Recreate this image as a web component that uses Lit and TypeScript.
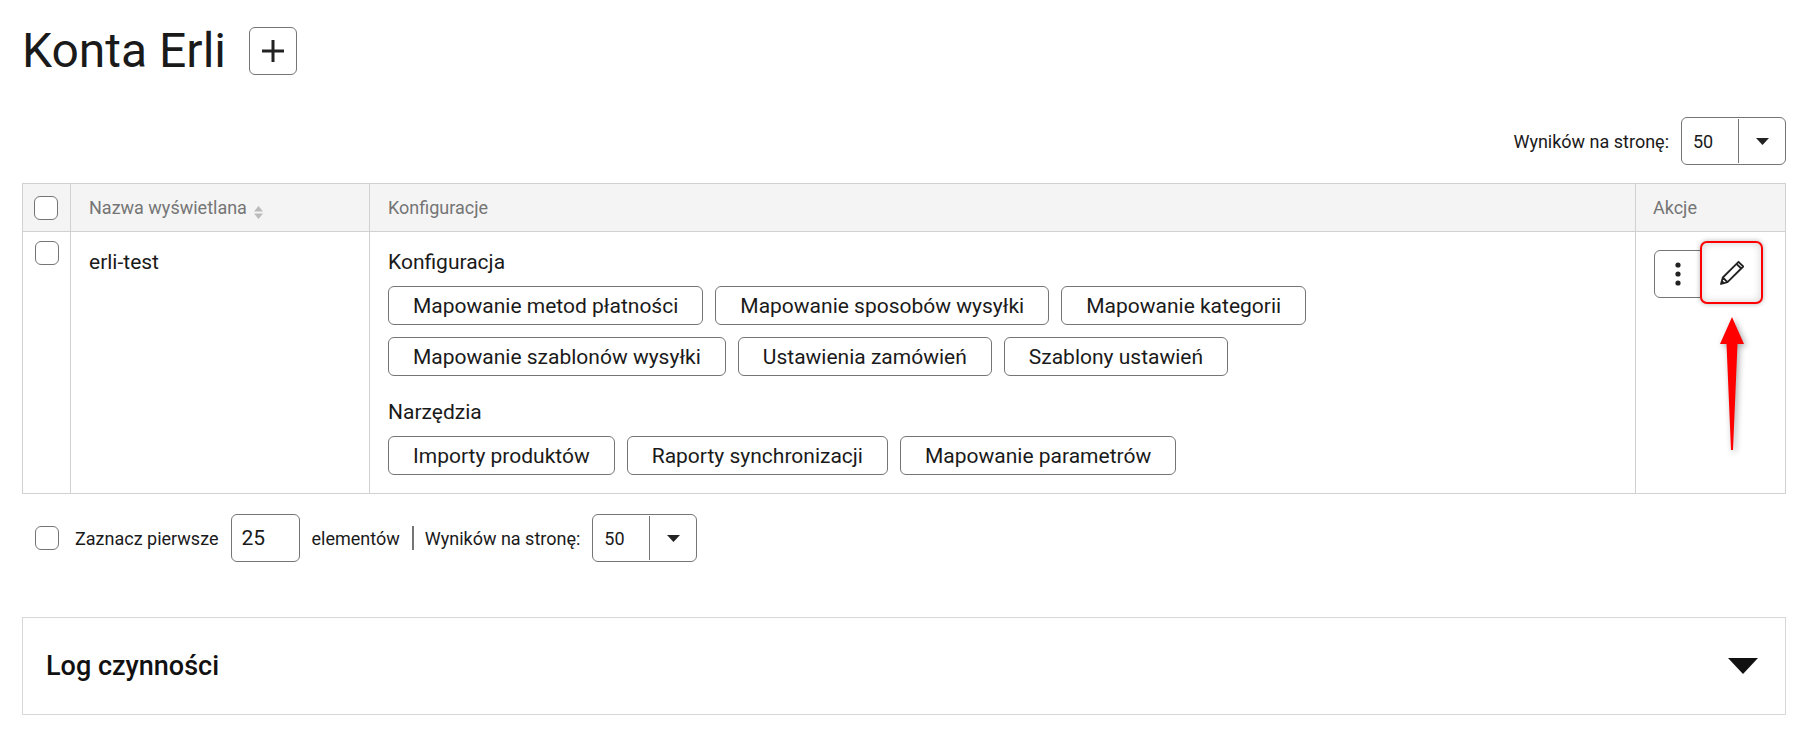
import { LitElement, html, css } from "lit";
import { customElement } from "lit/decorators.js";

const caret = html`<svg class="caret" width="13" height="7" viewBox="0 0 13 7"><path d="M0 0h13L6.500 7z" fill="#222"/></svg>`;

const select = (cls: string) => html`<div class="select ${cls}"><span class="val">50</span><span class="arr">${caret}</span></div>`;

@customElement("app-root")
export class AppRoot extends LitElement {
  static styles = css`
    :host { display: block; box-sizing: border-box; height: 737px; overflow: hidden; padding: 0 23px 0 22px; background: #fff; color: #1a1a1a; font-family: Roboto, sans-serif; font-size: 21px; }
    * { box-sizing: border-box; }
    .head { display: flex; align-items: center; gap: 23px; padding-top: 27px; height: 75px; }
    h1 { margin: 0; font-weight: 400; font-size: 48px; line-height: 48px; }
    .sq { width: 48px; height: 48px; border: 1px solid #757575; border-radius: 6px; background: #fff; display: flex; align-items: center; justify-content: center; flex: none; padding: 0; }
    .top { display: flex; justify-content: flex-end; align-items: center; gap: 12px; margin-top: 42px; height: 48px; font-size: 18px; }
    .select { display: flex; height: 48px; border: 1px solid #757575; border-radius: 6px; align-items: stretch; font-size: 18px; }
    .select.big { width: 105px; }
    .select .val { width: 57px; padding-left: 11px; display: flex; align-items: center; border-right: 1px solid #757575; margin: 1px 0; }
    .select .arr { flex: 1; display: flex; align-items: center; justify-content: center; }
    table { border-collapse: collapse; table-layout: fixed; width: 100%; margin-top: 18px; }
    th, td { border: 1px solid #d1d1d1; text-align: left; vertical-align: top; padding: 0; }
    th { background: #f4f4f4; color: #757575; font-weight: 400; font-size: 18px; height: 48px; padding: 0 18px; vertical-align: middle; }
    th.last { padding-left: 17px; }
    th.c0, td.c0 { padding: 0; }
    .cb { display: block; width: 24px; height: 24px; border: 1px solid #757575; border-radius: 6px; background: #fff; }
    th .cb { margin-left: 11px; }
    td .cb { margin: 9px 0 0 12px; }
    .sort { display: inline-flex; vertical-align: -5px; margin-left: 3px; }
    td.name { padding: 16px 18px 0; line-height: 28px; }
    td.conf { padding: 16px 18px 17px; height: 262px; }
    .lbl { line-height: 28px; }
    .btns { display: flex; flex-wrap: wrap; gap: 12px; margin-top: 10px; }
    .btn { height: 39px; padding: 0 24px; border: 1px solid #757575; border-radius: 6px; display: flex; align-items: center; background: #fff; font-size: 21px; white-space: nowrap; }
    .lbl.second { margin-top: 22px; }
    td.act { padding: 18px 17px 0 18px; position: relative; }
    .acts { display: flex; }
    .acts .sq.l { border-radius: 6px 0 0 6px; }
    .acts .sq.r { border: none; position: relative; z-index: 1; }
    .hl { position: absolute; left: -2px; top: -9px; width: 63px; height: 63px; border: 2px solid #ff0000; border-radius: 7px; box-shadow: 0 0 5px rgba(0,0,0,.3), inset 0 0 8px rgba(0,0,0,.18); background: #fff; display: flex; align-items: center; justify-content: center; }
    .arrow { position: absolute; left: 83px; top: 85px; overflow: visible; filter: drop-shadow(2px 2px 3px rgba(0,0,0,.35)); }
    .foot { display: flex; align-items: center; margin-top: 20px; height: 48px; font-size: 18px; padding-left: 13px; }
    .foot .cb { margin: 0 16px 0 0; }
    .input { width: 69px; height: 48px; border: 1px solid #757575; border-radius: 6px; margin: 0 11px 0 13px; display: flex; align-items: center; padding-left: 9px; font-size: 21px; }
    .sep { width: 2px; height: 24px; background: #757575; margin: 0 11px 0 12px; }
    .foot .select { margin-left: 12px; width: 105px; }
    .log { margin-top: 55px; height: 98px; border: 1px solid #d8d8d8; display: flex; align-items: center; justify-content: space-between; padding: 0 27px 0 23px; }
    .log b { font-size: 27px; font-weight: 500; color: #111; }
  `;

  render() {
    return html`
      <div class="head">
        <h1>Konta Erli</h1>
        <button class="sq"><svg width="24" height="24" viewBox="0 0 24 24"><path d="M12 1v22M1 12h22" stroke="#222" stroke-width="3" fill="none"/></svg></button>
      </div>
      <div class="top"><span>Wyników na stronę:</span>${select("big")}</div>
      <table>
        <colgroup><col style="width:48px"/><col style="width:299px"/><col/><col style="width:150px"/></colgroup>
        <thead><tr>
          <th class="c0"><span class="cb"></span></th>
          <th>Nazwa wyświetlana <span class="sort"><svg width="9" height="13" viewBox="0 0 9 13"><path d="M4.500 0L9 5.500H0zM0 7.500h9L4.500 13z" fill="#bbb"/></svg></span></th>
          <th>Konfiguracje</th>
          <th class="last">Akcje</th>
        </tr></thead>
        <tbody><tr>
          <td class="c0"><span class="cb"></span></td>
          <td class="name">erli-test</td>
          <td class="conf">
            <div class="lbl">Konfiguracja</div>
            <div class="btns">
              ${["Mapowanie metod płatności","Mapowanie sposobów wysyłki","Mapowanie kategorii","Mapowanie szablonów wysyłki","Ustawienia zamówień","Szablony ustawień"].map(t => html`<span class="btn">${t}</span>`)}
            </div>
            <div class="lbl second">Narzędzia</div>
            <div class="btns">
              ${["Importy produktów","Raporty synchronizacji","Mapowanie parametrów"].map(t => html`<span class="btn">${t}</span>`)}
            </div>
          </td>
          <td class="act">
            <div class="acts">
              <button class="sq l"><svg width="6" height="24" viewBox="0 0 6 24"><circle cx="3" cy="3" r="2.600" fill="#222"/><circle cx="3" cy="12" r="2.600" fill="#222"/><circle cx="3" cy="21" r="2.600" fill="#222"/></svg></button>
              <button class="sq r">
                <span class="hl"><svg width="26" height="26" viewBox="0 0 26 26"><path d="M2 24l1.800-6.500L17.500 3.800l4.700 4.700L8.500 22.200zM3.800 17.500l4.700 4.700M17.500 3.800l2-2 4.700 4.700-2 2" fill="none" stroke="#222" stroke-width="1.800" stroke-linejoin="round"/><path d="M2 24l1-4 3 3z" fill="#222"/></svg></span>
              </button>
            </div>
            <svg class="arrow" width="26" height="134" viewBox="0 0 26 134"><path d="M13 0L25 27H18.500L14 133h-2L7.500 27H1z" fill="#ff0000"/></svg>
          </td>
        </tr></tbody>
      </table>
      <div class="foot">
        <span class="cb"></span><span>Zaznacz pierwsze</span><span class="input">25</span><span>elementów</span><span class="sep"></span><span>Wyników na stronę:</span>${select("")}
      </div>
      <div class="log"><b>Log czynności</b><svg width="30" height="16" viewBox="0 0 30 16"><path d="M0 0h30L15 16z" fill="#111"/></svg></div>
    `;
  }
}
